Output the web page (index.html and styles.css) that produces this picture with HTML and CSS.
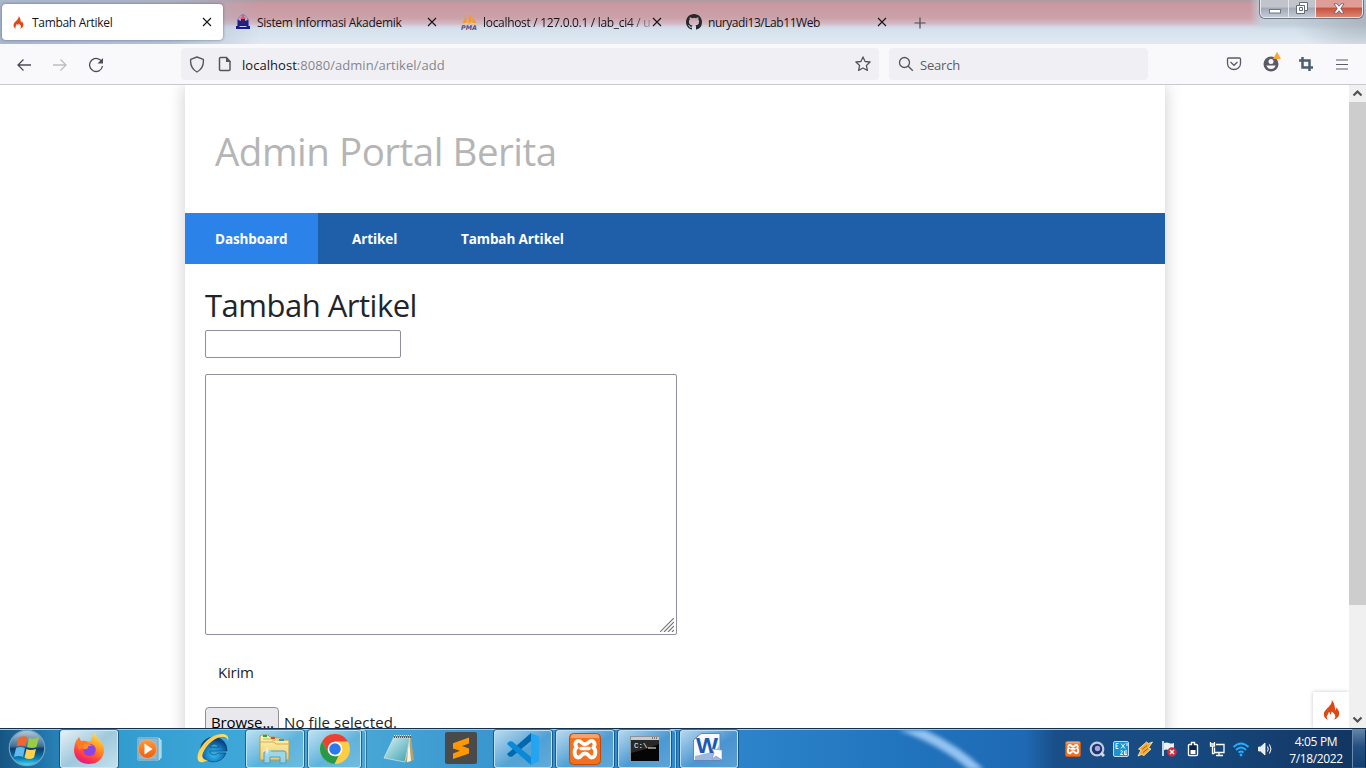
FILE: index.html
```
<!DOCTYPE html>
<html lang="id">
<head>
<meta charset="utf-8">
<title>Tambah Artikel</title>
<link rel="stylesheet" href="styles.css">
</head>
<body>
<svg class="defs" width="0" height="0">
  <defs>
    <symbol id="flame" viewBox="0 0 16 20"><path d="M8.2 0c.6 2.600-.7 4-2.500 6.200C3.700 8.600.3 10.800.3 14.300c0 2.600 1.700 4.700 4.300 5.500-1.300-1.200-1.700-2.700-.9-4.200.6-1.200 1.500-1.900 1.500-3.500 1.200.6 1.700 1.700 1.500 2.800.9-.8 1.500-2 1.200-3.500 2.300 1.200 4.300 3.300 3.900 5.600-.2 1.300-.9 2.100-1.800 2.800 3-.7 5.700-2.800 5.700-6.200 0-2.700-1.600-3.900-2.500-6.100-.8 1-.6 2-1 3C10.800 8.600 12 3.700 8.200 0z"/></symbol>
    <symbol id="close" viewBox="0 0 10 10"><path d="M1 1l8 8M9 1l-8 8" fill="none" stroke="#15141a" stroke-width="1.100"/></symbol>
    <symbol id="xampp" viewBox="0 0 32 32"><rect x=".5" y=".5" width="31" height="31" rx="4" fill="#f3701e" stroke="#bd4a08"/><path d="M2 4q0-3 3-3h22q3 0 3 3v1H2z" fill="#fff" opacity=".35"/><path d="M12.500 9.500C9 5.500 4.500 9.500 7.500 14.500 4.500 17 5 24.500 9.500 24.500c3 0 2.500-4 6.500-4s3.500 4 6.500 4c4.500 0 5-7.500 2-10 3-5-1.500-9-5-5-2.500 2.500-4.500 2.500-7 0z" fill="none" stroke="#fff" stroke-width="3.800"/><path d="M12 15.500h8" stroke="#fff" stroke-width="3.500" stroke-linecap="round"/></symbol>
    <linearGradient id="ff" x1=".8" y1="0" x2=".3" y2="1"><stop offset="0" stop-color="#ffe84a"/><stop offset=".45" stop-color="#ff8a22"/><stop offset=".75" stop-color="#ff3b47"/><stop offset="1" stop-color="#e0168a"/></linearGradient>
    <linearGradient id="orb" x1="0" y1="0" x2="0" y2="1"><stop offset="0" stop-color="#b8cbd9"/><stop offset=".45" stop-color="#3f6f94"/><stop offset=".52" stop-color="#0c3c66"/><stop offset=".8" stop-color="#087fb5"/><stop offset="1" stop-color="#4de5ff"/></linearGradient>
    <linearGradient id="folder" x1="0" y1="0" x2="0" y2="1"><stop offset="0" stop-color="#fff6b8"/><stop offset="1" stop-color="#edcc69"/></linearGradient>
    <linearGradient id="pad" x1="0" y1="0" x2="1" y2="1"><stop offset="0" stop-color="#dcf4f5"/><stop offset="1" stop-color="#3b9eae"/></linearGradient>
    <radialGradient id="ieb" cx=".5" cy=".7" r=".6"><stop offset="0" stop-color="#33c3f2"/><stop offset=".6" stop-color="#1478bd"/><stop offset="1" stop-color="#08417e"/></radialGradient>
    <linearGradient id="gold" x1="0" y1="0" x2="1" y2="1"><stop offset="0" stop-color="#f4a51c"/><stop offset=".5" stop-color="#ffe26b"/><stop offset="1" stop-color="#e98e10"/></linearGradient>
    <linearGradient id="wmp" x1="0" y1="0" x2="0" y2="1"><stop offset="0" stop-color="#ff9a3c"/><stop offset="1" stop-color="#ee5d0a"/></linearGradient>
  </defs>
</svg>
<div class="window">
  <header class="tabstrip">
    <div class="tab active"><svg class="favicon flame" width="11" height="13"><use href="#flame"/></svg><span class="tab-title t1">Tambah Artikel</span><svg class="x" width="10" height="10"><use href="#close"/></svg></div>
    <div class="tab"><svg class="favicon" width="14" height="16" viewBox="0 0 14 16"><path d="M1 6l3-4 3-2 3 2 3 4v6H1z" fill="#6968b5"/><circle cx="7" cy="6" r="4.500" fill="#b8aad2"/><path d="M7 1l3 4H4z" fill="#e35569"/><path d="M2 6l5 1.500L12 6v6H2z" fill="#1c2189"/><path d="M5 5h4v5H5z" fill="#32245e"/><path d="M0 12h3l1 1h6l1-1h3v3H0z" fill="#1b1c83"/><path d="M4 12.500h6" stroke="#ccc6ec"/></svg><span class="tab-title t2">Sistem Informasi Akademik</span><svg class="x" width="10" height="10"><use href="#close"/></svg></div>
    <div class="tab"><svg class="favicon" width="17" height="16" viewBox="0 0 17 16"><path d="M5.500 2L1 10h4.500zM10 0L6 10h4.500zM11.500 3l4.500 7-4.500.2z" fill="#f8981d"/><path d="M1 10q7-2 15 0" stroke="#ffc978" fill="none"/><text x="0" y="15.500" font-family="DejaVu Sans" font-weight="bold" font-style="italic" font-size="6.500" fill="#55527e" textLength="16" lengthAdjust="spacingAndGlyphs">PMA</text></svg><span class="tab-title t3">localhost / 127.0.0.1 / lab_ci4 / u</span><svg class="x" width="10" height="10"><use href="#close"/></svg></div>
    <div class="tab"><svg class="favicon" width="16" height="16" viewBox="0 0 16 16"><path fill="#24292f" d="M8 0C3.580 0 0 3.580 0 8c0 3.540 2.290 6.530 5.470 7.590.4.070.55-.17.55-.38 0-.19-.01-.82-.01-1.490-2.010.37-2.530-.49-2.690-.94-.09-.23-.48-.94-.82-1.130-.28-.15-.68-.52-.01-.53.63-.01 1.080.58 1.230.82.72 1.210 1.870.87 2.330.66.070-.52.28-.87.51-1.070-1.780-.2-3.640-.89-3.640-3.950 0-.87.31-1.590.82-2.150-.08-.2-.36-1.020.08-2.120 0 0 .67-.21 2.200.82a7.600 7.600 0 0 1 4 0c1.530-1.040 2.200-.82 2.200-.82.44 1.100.16 1.920.08 2.120.51.56.82 1.270.82 2.150 0 3.070-1.870 3.750-3.650 3.950.29.25.54.73.54 1.480 0 1.070-.01 1.930-.01 2.200 0 .21.15.46.55.38A8 8 0 0 0 16 8c0-4.420-3.580-8-8-8z"/></svg><span class="tab-title t4">nuryadi13/Lab11Web</span><svg class="x" width="10" height="10"><use href="#close"/></svg></div>
    <svg class="newtab" width="12" height="12" viewBox="0 0 12 12"><path d="M6 .5v11M.5 6h11" stroke="#4b4b57" stroke-width="1.200"/></svg>
    <div class="caption">
      <span class="cap-btn min"><svg width="12" height="6" viewBox="0 0 12 6"><rect x=".5" y="1.500" width="11" height="3.500" fill="#fff" stroke="#6d7586"/></svg></span>
      <span class="cap-btn restore"><svg width="12" height="12" viewBox="0 0 12 12"><path d="M3.500.5h8v8h-3v3h-8v-8h3z" fill="#fff" stroke="#626b7b"/><path d="M3.500 3.500h5v5M3.500 5.500h3v3h-3z" fill="none" stroke="#626b7b"/></svg></span>
      <span class="cap-btn shut"><svg width="12" height="11" viewBox="0 0 12 11"><path d="M1 .8h3L6 3.300 8 .8h3L7.800 5.500 11 10.200H8L6 7.700l-2 2.500H1l3.200-4.700z" fill="#fff" stroke="#65586a" stroke-width=".8"/></svg></span>
    </div>
  </header>

  <div class="toolbar">
    <div class="nav-icons">
      <svg width="16" height="16" viewBox="0 0 16 16"><path d="M15 8H1.500M7.500 2.500L2 8l5.500 5.500" fill="none" stroke="#4c4c58" stroke-width="1.300"/></svg>
      <svg width="16" height="16" viewBox="0 0 16 16"><path d="M1 8h13.500M8.500 2.500L14 8l-5.500 5.500" fill="none" stroke="#bdbdc2" stroke-width="1.300"/></svg>
      <svg width="16" height="16" viewBox="0 0 16 16"><path d="M14 5.300A6.500 6.500 0 1 0 14.500 9" fill="none" stroke="#4c4c58" stroke-width="1.300"/><path d="M15 1v5.500H9.500z" fill="#4c4c58"/></svg>
    </div>
    <div class="urlbar">
      <svg class="shield" width="16" height="17" viewBox="0 0 16 17"><path d="M8 1l6.300 2.300c.6 5.500-1.300 10-6.300 12.700C3 13.300 1.100 8.800 1.700 3.300z" fill="none" stroke="#55555f" stroke-width="1.400" stroke-linejoin="round"/></svg>
      <svg class="doc" width="14" height="16" viewBox="0 0 14 16"><path d="M2.500 1.500h6l3.500 4v8q0 1-1 1H2.500q-1 0-1-1v-11q0-1 1-1z" fill="none" stroke="#55555f" stroke-width="1.500"/><path d="M8 1v5h5z" fill="#55555f"/></svg>
      <span class="url"><b>localhost</b>:8080/admin/artikel/add</span>
      <svg class="star" width="16" height="16" viewBox="0 0 16 16"><path d="M8 .9l2.100 4.600 5 .5-3.700 3.400 1 5L8 12l-4.400 2.400 1-5L.9 6l5-.5z" fill="none" stroke="#55555f" stroke-width="1.300" stroke-linejoin="round"/></svg>
    </div>
    <div class="searchbar"><svg width="16" height="16" viewBox="0 0 16 16"><circle cx="6.500" cy="6.500" r="5" fill="none" stroke="#55555f" stroke-width="1.300"/><path d="M10 10l4.800 4.800" stroke="#55555f" stroke-width="1.400"/></svg><span class="hint">Search</span></div>
    <div class="tools">
      <svg width="16" height="16" viewBox="0 0 16 16"><path d="M2.500 2h11q1 0 1 1v4.500a6.500 6 0 0 1-13 0V3q0-1 1-1z" fill="none" stroke="#5b5b66" stroke-width="1.300"/><path d="M4.500 6L8 9.300 11.500 6" fill="none" stroke="#5b5b66" stroke-width="1.300"/></svg>
      <svg width="20" height="22" viewBox="0 0 20 22"><circle cx="9" cy="13" r="7.500" fill="#5b5b66"/><circle cx="9" cy="10.500" r="2.500" fill="#f9f9fb"/><path d="M4.500 14.500h9q-1 3.500-4.500 3.500t-4.500-3.500z" fill="#f9f9fb"/><path d="M15 .8l4 7.200h-8z" fill="#ffa436"/></svg>
      <svg width="14" height="14" viewBox="0 0 14 14"><path d="M3.500 0v10.500H14M0 3.500h10.500V14" fill="none" stroke="#4a5f70" stroke-width="2.500"/></svg>
      <svg width="12" height="11" viewBox="0 0 12 11"><path d="M0 1h12M0 5.500h12M0 10h12" stroke="#5b5b66" stroke-width="1.200"/></svg>
    </div>
  </div>

  <div class="viewport">
    <div class="page">
      <main class="container">
        <div class="masthead"><h1>Admin Portal Berita</h1></div>
        <nav><a class="on">Dashboard</a><a class="n2">Artikel</a><a class="n3">Tambah Artikel</a></nav>
        <section class="content">
          <h2>Tambah Artikel</h2>
          <form>
            <input class="title-field" type="text">
            <div class="area"><textarea></textarea><svg class="grip" width="14" height="14" viewBox="0 0 14 14"><path d="M0 14L14 0M4 14L14 4M8 14l6-6M12 14l2-2" stroke="#77777c" stroke-width="1.200"/></svg></div>
            <div class="submit">Kirim</div>
            <div class="file"><span class="browse">Browse...</span><span class="nofile">No file selected.</span></div>
          </form>
        </section>
      </main>
      <div class="debug"><svg width="17" height="20" viewBox="0 0 16 20"><use href="#flame"/></svg></div>
    </div>
    <div class="scrollbar">
      <svg width="17" height="17" viewBox="0 0 17 17"><path d="M4.500 10.500l4-4 4 4" fill="none" stroke="#505050" stroke-width="2.200"/></svg>
      <div class="thumb"></div>
      <svg class="down" width="17" height="17" viewBox="0 0 17 17"><path d="M4.500 6.500l4 4 4-4" fill="none" stroke="#505050" stroke-width="2.200"/></svg>
    </div>
  </div>

  <footer class="taskbar">
    <svg class="swoosh" width="130" height="40" viewBox="0 0 130 40"><path d="M0-6Q55 12 89 48" fill="none" stroke="#94c3f0" stroke-width="10"/></svg>
    <div class="start"><svg width="38" height="38" viewBox="0 0 38 38"><circle cx="19" cy="19" r="17.700" fill="url(#orb)" stroke="#6fa3c4" stroke-width="1.200"/><path d="M10.500 9q4-3 9-1l-2 9.500q-4-2-9 0z" fill="#ef6632"/><path d="M21 9q5 2 10-1l-2.500 10q-4.500 2-9.500 0z" fill="#97cc45"/><path d="M8 19q4-2 9 0l-2 9q-4-2-9 0z" fill="#62b9ef"/><path d="M18.500 20q4 2 9.500 0l-2 8.500q-4.500 3-9.500 0z" fill="#ffd04b"/></svg></div>
    <div class="apps">
      <div class="app open current"><svg width="32" height="32" viewBox="0 0 32 32"><path d="M18 8q1-5 4-8 1 4 4 6 5 5 5 11c0 8-6 14-15 14S1 25 1 17q0-6 3-11l1 3q4-1 7 0z" fill="url(#ff)"/><path d="M3 9l3-5 2 4q4-1 7 1l-2 4-7 4z" fill="#ff7a22"/><circle cx="16.500" cy="17" r="6.200" fill="#8a45e6"/><path d="M10 12q5-3 10 1-6-1-5 2-2 2-5 1z" fill="#ff8c24"/><path d="M7 17q3 7 10 6 4-.5 7-4-4 8-12 5-4-2-5-7z" fill="#ff5038" opacity=".7"/></svg></div>
      <div class="app media"><svg width="30" height="28" viewBox="0 0 30 28"><path d="M4 3h20v22H4zM24 3l2 1v20l-2 1M27 5v18" fill="#8ec4e3" stroke="#d0edfa"/><path d="M4 3h20v22H4z" fill="#85bbdc" stroke="#70a1be"/><circle cx="13.500" cy="14" r="9.200" fill="url(#wmp)" stroke="#fbb16e" stroke-width=".6"/><path d="M10.500 8.500l8 5.500-8 5.500z" fill="#fff"/></svg></div>
      <div class="app"><svg width="32" height="32" viewBox="0 0 32 32"><path fill-rule="evenodd" d="M17 4a13 12.500 0 1 0 12 16h-8q-4 4-8 0v-2h17A13 13 0 0 0 17 4zm-4 10q4-6 9 0z" fill="url(#ieb)" stroke="#0a4277" stroke-width=".6"/><path d="M31 8C34-3 14-1 5 13-3 24 0 34 11 27 2 28 5 19 11 12 18 4 30 0 31 8z" fill="url(#gold)"/></svg></div>
      <div class="app open"><svg width="34" height="32" viewBox="0 0 34 32"><path d="M2 4q0-2 2-2h6l2 2h4l2 1h5l1 2h7v20H2z" fill="url(#folder)" stroke="#bb9744"/><path d="M2 9h14l2 2h14M5 6h10M14 7h14" stroke="#d4ad50" fill="none"/><path d="M5 2h4v2H5z" fill="#24a53b"/><path d="M13 4h4v2h-4z" fill="#d84929"/><path d="M21 6h5v2h-5z" fill="#3394d7"/><path d="M6 30V20q0-2 2-2h18q2 0 2 2v10h-6v-6H12v6z" fill="#93d7ef" fill-opacity=".9" stroke="#509bc4"/><path d="M9 13l.7 4.300L14 18l-4.300.7L9 23l-.7-4.300L4 18l4.300-.7z" fill="#fff" opacity=".8"/></svg></div>
      <div class="app open stacked"><svg width="30" height="30" viewBox="0 0 30 30"><circle cx="15" cy="15" r="15" fill="#ffcd42"/><path d="M2 7.500A15 15 0 0 1 28 7.500H15L8.500 18.700z" fill="#e94235"/><path d="M2 7.500l6.500 11.200Q12 23 18.500 22L14.500 30A15 15 0 0 1 2 7.500z" fill="#26994b"/><circle cx="15" cy="15" r="7.300" fill="#fff"/><circle cx="15" cy="15" r="5.800" fill="#2a79ed"/></svg></div>
      <div class="app"><svg width="32" height="32" viewBox="0 0 32 32"><path d="M11 4l17 1 3 22-7 3z" fill="#b8a269"/><path d="M26 5l2 23-4 1z" fill="#f4f4e8"/><path d="M11 4l16 1-5 24L1 25z" fill="url(#pad)" stroke="#e2f2ee" stroke-width=".6"/><path d="M11 3.500h17" stroke="#575d5b" stroke-width="3" stroke-dasharray="1 1"/><path d="M11 2.500h17" stroke="#e7ecea" stroke-dasharray="1 1"/></svg></div>
      <div class="app sublime"><svg width="32" height="32" viewBox="0 0 32 32"><rect width="32" height="32" rx="2" fill="#4a4a4a"/><path d="M8 11.200L24 5.500v6l-7 2.600 7 2.400v5L8 27v-5.500l7-2.700-7-2.400z" fill="#ff9800"/></svg></div>
      <div class="app open"><svg width="32" height="32" viewBox="0 0 32 32"><path d="M24 0L0 21l2 2.500 3 .3L24 8z" fill="#0068ae"/><path d="M24 32L0 11l2-2.500 3-.3L24 24z" fill="#0989d6"/><path d="M24 0l8 3.500v25L24 32z" fill="#23a5f2"/></svg></div>
      <div class="app open"><svg width="32" height="32"><use href="#xampp"/></svg></div>
      <div class="app open stacked"><svg width="30" height="26" viewBox="0 0 30 26"><rect x=".5" y=".5" width="29" height="25" fill="#050505" stroke="#8c9298"/><path d="M1 1h28v3H1z" fill="#c5cbd0"/><path d="M22 2h1m1 0h1m1 0h1" stroke="#333"/><path d="M1 4h28v4Q18 13 1 17z" fill="#555" opacity=".45"/><text x="4" y="12" font-family="Liberation Mono" font-size="7.500" fill="#fff">C:\</text><path d="M18 12h8" stroke="#fff"/></svg></div>
      <div class="app open word"><svg width="32" height="32" viewBox="0 0 32 32"><path d="M9 1.500h19v27H1.500V8z" fill="#f7faff" stroke="#6584bd"/><path d="M3 24l21-5 4-8v17H3z" fill="#9db8de"/><text x="4" y="21" font-family="Liberation Sans" font-weight="bold" font-size="22" fill="#1c59b4" textLength="22" lengthAdjust="spacingAndGlyphs">W</text><path d="M20 17l10 1v10l-6-4-4 3 2-6z" fill="#fff" stroke="#7590bd" stroke-width=".6"/></svg></div>
    </div>
    <div class="tray">
      <svg width="16" height="16"><use href="#xampp"/></svg>
      <svg width="16" height="16" viewBox="0 0 16 16"><circle cx="8" cy="8" r="7.400" fill="#c4cada"/><circle cx="8" cy="8" r="5.200" fill="#18366d"/><circle cx="8.500" cy="7.500" r="2.700" fill="#a4a6dd"/><path d="M12 12l3 3" stroke="#d5dae7" stroke-width="3"/></svg>
      <svg width="16" height="16" viewBox="0 0 16 16"><rect x=".5" y=".5" width="15" height="15" rx="1.500" fill="#1993d1" stroke="#bddef0"/><path d="M5.500 2.500H3v5h2.500M3 5h2M8 2.500l4 5m0-5l-4 5M14 2v3M7.500 10q2-1 2 .5l-2 3h2.500M14 10h-2.500v3.500H14M11.500 12H14" stroke="#eefaff" fill="none"/></svg>
      <svg width="16" height="16" viewBox="0 0 16 16"><path d="M9.500 1L1.500 8l2.500 1L1 15l3.500-1.500L7 14.500l7-6.500-2.500-1L15.500 1l-4 1.500z" fill="#f6ab36" stroke="#fff1bf" stroke-width=".8"/><path d="M5 8.500l5-4M6 11.500l5-4" stroke="#9f671a"/></svg>
      <svg width="16" height="16" viewBox="0 0 16 16"><path d="M2 0v15" stroke="#fff" stroke-width="1.500"/><path d="M3 2q3-1 5 0t5 0v7q-2 1-5 0t-5 0z" fill="#eaf1f8"/><circle cx="11" cy="11" r="4.700" fill="#d52a38"/><path d="M9 9l4 4m0-4l-4 4" stroke="#fff" stroke-width="1.400"/></svg>
      <svg width="16" height="16" viewBox="0 0 16 16"><path d="M6.500 1.500h3v2h2q1 0 1 1v9q0 1-1 1h-7q-1 0-1-1v-9q0-1 1-1h2z" fill="#0b2450" stroke="#fff" stroke-width="1.400"/><path d="M5.500 9h5v4h-5z" fill="#fff"/></svg>
      <svg width="16" height="16" viewBox="0 0 16 16"><path d="M7 3.500h8v8H5.500v-5M10 11.500v3M7 14.500h7M3.500 5.500v7h2M1.500 1v4h4V1M1 3h5" fill="none" stroke="#fff" stroke-width="1.300"/></svg>
      <svg width="18" height="16" viewBox="0 0 18 16"><path d="M1.500 6Q9-1 16.500 6M4 9q5-5 10 0M6.500 11.500q2.500-2 5 0" fill="none" stroke="#20b0ff" stroke-width="1.900"/><circle cx="9" cy="14" r="1.400" fill="#20b0ff"/></svg>
      <svg width="16" height="16" viewBox="0 0 16 16"><path d="M1.500 6h2L8 2v12l-4.500-4h-2z" fill="#e8edf4" stroke="#fff" stroke-width=".8"/><path d="M10.500 5.500q1.500 2.500 0 5M12.500 3.500q3 4.500 0 9" fill="none" stroke="#fff"/></svg>
    </div>
    <div class="clock"><span class="time">4:05 PM</span><span class="date">7/18/2022</span></div>
    <div class="peek"></div>
  </footer>
</div>
</body>
</html>
```
FILE: styles.css
```
* { box-sizing: border-box; }
body { margin: 0; overflow: hidden; font-family: "Open Sans", "Noto Sans", sans-serif; color: #212529; }
svg { display: block; flex: none; }
.defs { position: absolute; }
.window { width: 1366px; height: 768px; display: flex; flex-direction: column; background: #fff; }

.tabstrip {
  height: 44px; flex: none; display: flex; align-items: flex-start; padding: 4px 0 0 2px; position: relative;
  background:
    radial-gradient(ellipse 75px 34px at 1366px 20px, #abb5bf 0, rgba(171,181,191,0) 100%),
    linear-gradient(90deg, #a9b8cc 0, rgba(169,184,204,.8) 170px, rgba(169,184,204,0) 260px),
    linear-gradient(rgba(200,212,224,0) 24px, #d5e1ec 30px, #dfe9f3 43px),
    linear-gradient(90deg, rgba(200,210,222,0) 1250px, #c2cfdb 1262px),
    linear-gradient(#ad9ba3 0, #c998a0 4px, #cda1a8 18px, #d2b7c2 23px, #d5e1ec 30px, #e4eef8 43px);
}
.tab { width: 225px; height: 36px; display: flex; align-items: center; padding: 0 15px 0 9px; }
.tab.active { width: 221px; margin-right: 4px; background: #fff; border-radius: 4px; box-shadow: 0 0 3px rgba(50,60,90,.6); padding-left: 11px; padding-right: 11px; }
.favicon { margin-right: 7px; }
.flame { fill: #dd4814; margin-right: 8px; }
.tab-title { flex: 1; width: 0; font-size: 12px; line-height: 18px; padding-top: 2px; color: #15141a; white-space: nowrap; overflow: hidden; letter-spacing: -.31px; }
.t3 { margin-left: -2px; -webkit-mask-image: linear-gradient(90deg, #000 145px, transparent 175px); mask-image: linear-gradient(90deg, #000 145px, transparent 175px); }
.t4 { margin-left: -1px; letter-spacing: -.45px; }
.newtab { margin: 13px 0 0 12px; }
.caption { position: absolute; right: 3px; top: -2px; height: 20px; display: flex; border: 1px solid #e5e9ef; border-radius: 0 0 5px 5px; box-shadow: 0 0 0 1px rgba(80,85,100,.7); overflow: hidden; }
.cap-btn { display: flex; align-items: center; justify-content: center; width: 28px; background: linear-gradient(#c2c4cb 0 45%, #9fa8b5 50%, #c3ccd5); border-right: 1px solid #e5e9ef; }
.min { padding-top: 5px; }
.restore { width: 27px; }
.shut { width: 46px; border: 0; background: linear-gradient(#df9d98 0 45%, #c4523d 50%, #dc8672); }

.toolbar { height: 41px; flex: none; display: flex; align-items: flex-start; padding-top: 4px; background: #f9f9fb; border-bottom: 1px solid #c8c8cd; }
.nav-icons { display: flex; gap: 20px; width: 181px; padding: 9px 0 0 16px; }
.urlbar { width: 698px; height: 32px; display: flex; align-items: center; padding: 0 8px; background: #f0f0f4; border-radius: 4px; margin-right: 10px; }
.doc { margin: 0 10px 0 13px; }
.url { flex: 1; padding-top: 2px; font-size: 13px; color: #86868d; letter-spacing: .04px; }
.url b { font-weight: 400; color: #15141a; }
.searchbar { width: 259px; height: 32px; display: flex; align-items: center; gap: 6px; padding-left: 9px; background: #f0f0f4; border-radius: 4px; font-size: 13px; color: #5b5b66; letter-spacing: -.2px; }
.hint { padding-top: 2px; }
.tools { display: flex; align-items: center; margin-left: 78px; height: 32px; }
.tools svg:nth-child(2) { margin: -4px 0 0 20px; }
.tools svg:nth-child(3) { margin-left: 17px; }
.tools svg:nth-child(4) { margin-left: 23px; }

.viewport { height: 643px; flex: none; display: flex; overflow: hidden; }
.page { width: 1349px; height: 643px; position: relative; overflow: hidden; background: #fff; }
.container { width: 980px; height: 760px; margin-left: 185px; background: #fff; box-shadow: 0 0 16px rgba(0,0,0,.2); }
.masthead { height: 128px; padding: 38px 30px 0; }
h1 { margin: 0; font-weight: 400; font-size: 38.500px; line-height: 56px; color: #b5b5b5; letter-spacing: -.48px; white-space: nowrap; }
nav { height: 51px; display: flex; background: #1f5faa; }
nav a { display: flex; align-items: center; color: #fff; font-weight: 700; font-size: 13.500px; letter-spacing: -.1px; white-space: nowrap; }
nav a.on { width: 133px; padding-left: 30px; background: #2b83ea; }
.n2 { width: 109px; margin-left: 34px; }
.content { padding: 22px 20px 0; }
h2 { margin: 0; height: 44px; font-size: 31px; line-height: 38px; font-weight: 400; letter-spacing: -.5px; white-space: nowrap; }
.title-field { display: block; width: 196px; height: 28px; border: 1px solid #8f8f9d; border-radius: 2px; background: #fff; padding: 0 4px; outline: 0; }
.area { position: relative; width: 472px; height: 261px; margin-top: 16px; }
textarea { display: block; width: 472px; height: 261px; resize: none; border: 1px solid #8f8f9d; border-radius: 2px; outline: 0; background: #fff; }
.grip { position: absolute; right: 3px; bottom: 3px; }
.submit { padding: 25px 13px 0; height: 72px; font-size: 15px; line-height: 24px; letter-spacing: -.2px; }
.file { display: flex; font-size: 15px; line-height: 28px; white-space: nowrap; }
.browse { width: 74px; height: 32px; border: 1px solid #8f8f9d; border-radius: 4px; background: #e9e9ed; color: #000; padding-left: 5px; margin-right: 5px; letter-spacing: -.1px; }
.nofile { padding-top: 1px; letter-spacing: .12px; }
.debug { position: absolute; right: 0; bottom: 0; width: 36px; height: 36px; display: flex; align-items: center; justify-content: center; background: #fff; box-shadow: 0 0 4px rgba(0,0,0,.22); fill: #dd4814; }
.scrollbar { width: 17px; background: #f0f0f0; display: flex; flex-direction: column; }
.thumb { height: 503px; background: #cdcdcd; }
.down { margin-top: auto; }

.taskbar { height: 40px; flex: none; display: flex; position: relative; overflow: hidden; border-top: 1px solid #132f4b; box-shadow: inset 0 1px #9dcce8;
  background: linear-gradient(90deg, #165583 0, #267fb5 55px, #329bcd 110px, #3ba6d8 220px, #4baad7 340px, #3c98d0 470px, #328cce 640px, #2c83c9 750px, #2174be 900px, #1f69b4 1025px, #194e87 1056px, #174a80 1180px, #12345f 1366px); }
.swoosh { position: absolute; left: 896px; top: 1px; filter: blur(2px); }
.start { width: 60px; padding: 0 0 0 8px; }
.apps { display: flex; gap: 4px; width: 1005px; padding-top: 1px; }
.app { width: 58px; height: 38px; display: flex; align-items: center; justify-content: center; position: relative; }
.media { padding-right: 4px; }
.sublime { padding-bottom: 2px; }
.word { padding: 0 2px 2px 0; }
.open { border: 1px solid rgba(205,235,252,.85); border-radius: 3px; background: linear-gradient(145deg, rgba(255,255,255,.65), rgba(255,255,255,.13) 55%, rgba(255,255,255,.22)); box-shadow: 0 0 0 1px rgba(18,60,94,.65); }
.current { background: linear-gradient(145deg, #e6f0f6, #a0c8dc 50%, #c2e1ed); }
.stacked { width: 53px; margin-right: 5px; }
.stacked::after { content: ""; position: absolute; top: -1px; right: -6px; width: 5px; height: 38px; border: solid rgba(195,229,247,.8); border-width: 1px 1px 1px 0; border-radius: 0 3px 3px 0; box-shadow: 1px 0 rgba(18,60,94,.5); }
.tray { display: flex; gap: 8px; padding-top: 12px; width: 217px; }
.tray svg:nth-child(8) { margin: 0 -1px; }
.clock { width: 68px; margin-right: 2px; padding-top: 4px; display: flex; flex-direction: column; align-items: center; color: #fff; font-size: 12px; line-height: 17px; letter-spacing: -.35px; white-space: nowrap; }
.peek { width: 14px; border: 1px solid #688cae; border-color: #688cae #0d2b50 #2f557d #688cae; background: linear-gradient(#6183a7, #234f81 45%, #143e70); }
```
